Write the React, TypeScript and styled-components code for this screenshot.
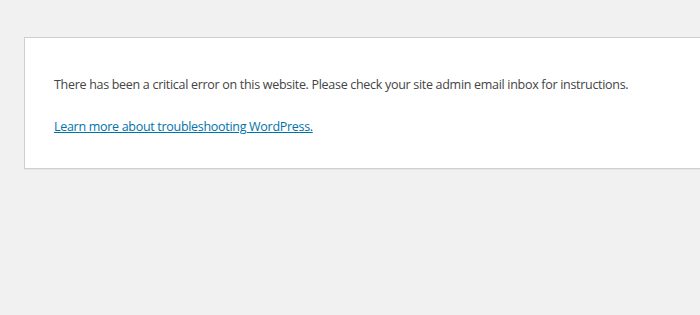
import React from 'react';
import styled, { createGlobalStyle } from 'styled-components';

const GlobalStyle = createGlobalStyle`
  html, body {
    margin: 0;
    padding: 0;
    background: #f1f1f1;
    overflow: hidden;
  }
`;

const Page = styled.div`
  padding: 37px 0 0 24px;
  width: 700px;
  height: 315px;
  box-sizing: border-box;
  overflow: hidden;
`;

const ErrorBox = styled.div`
  width: 720px;
  box-sizing: border-box;
  background: #fff;
  border: 1px solid #ccd0d4;
  box-shadow: 0 1px 1px rgba(0, 0, 0, 0.04);
  padding: 36px 29px 31px;
  font-family: 'Open Sans', 'Noto Sans', sans-serif;
  color: #444;
  display: flex;
  flex-direction: column;
  gap: 21px;
`;

const Message = styled.p`
  margin: 0;
  font-size: 12.5px;
  letter-spacing: -0.3px;
  line-height: 21px;
  white-space: nowrap;
`;

const HelpLink = styled.a`
  color: #0073aa;
  text-decoration: underline;
`;

export default function App() {
  return (
    <>
      <GlobalStyle />
      <Page>
        <ErrorBox>
          <Message>
            There has been a critical error on this website. Please check your site admin email inbox for instructions.
          </Message>
          <Message>
            <HelpLink href="#">Learn more about troubleshooting WordPress.</HelpLink>
          </Message>
        </ErrorBox>
      </Page>
    </>
  );
}
